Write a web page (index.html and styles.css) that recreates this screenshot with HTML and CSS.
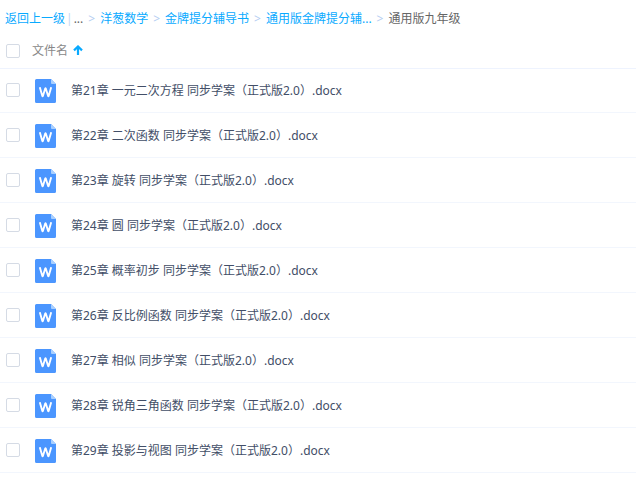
FILE: index.html
```html
<!DOCTYPE html>
<html lang="zh-CN">
<head>
<meta charset="utf-8">
<title>通用版九年级</title>
<link rel="stylesheet" href="styles.css">
</head>
<body>
<svg class="defs" aria-hidden="true">
  <symbol id="word" viewBox="0 0 21 24">
    <path fill="#4b96ff" d="M1.5 0H16L21 5V22.5a1.5 1.5 0 0 1-1.5 1.5H1.5a1.5 1.5 0 0 1-1.5-1.5V1.5a1.5 1.5 0 0 1 1.5-1.5z"/>
    <path fill="#a9d0ff" d="M16 0L21 5H17a1 1 0 0 1-1-1z"/>
    <path fill="none" stroke="#fff" stroke-width="1.9" stroke-linejoin="bevel" d="M4.8 8.2L7.4 17.2H7.8L10.3 9.2H10.7L13.2 17.2H13.6L16.2 8.2"/>
  </symbol>
</svg>
<nav class="crumbs" aria-label="路径">
  <a href="#">返回上一级</a><span class="bar">|</span><span class="more">...</span>
  <span class="sep">&gt;</span><a href="#">洋葱数学</a>
  <span class="sep">&gt;</span><a href="#">金牌提分辅导书</a>
  <span class="sep">&gt;</span><a href="#">通用版金牌提分辅...</a>
  <span class="sep">&gt;</span><span class="current">通用版九年级</span>
</nav>
<table class="files">
  <colgroup><col class="col-pick"><col class="col-type"><col></colgroup>
  <thead>
    <tr>
      <th class="pick"><input type="checkbox" aria-label="全选"></th>
      <th colspan="2" class="heading">文件名<svg class="arrow" viewBox="0 0 10 10" aria-hidden="true"><path fill="none" stroke="#09aaff" stroke-width="2.2" d="M5 10V1.5M1 5.4L5 1.5L9 5.4"/></svg></th>
    </tr>
  </thead>
  <tbody>
    <tr><td class="pick"><input type="checkbox" id="f21"></td><td class="type"><svg class="doc"><use href="#word"/></svg></td><td class="name"><label for="f21">第21章 一元二次方程 同步学案（正式版2.0）.docx</label></td></tr>
    <tr><td class="pick"><input type="checkbox" id="f22"></td><td class="type"><svg class="doc"><use href="#word"/></svg></td><td class="name"><label for="f22">第22章 二次函数 同步学案（正式版2.0）.docx</label></td></tr>
    <tr><td class="pick"><input type="checkbox" id="f23"></td><td class="type"><svg class="doc"><use href="#word"/></svg></td><td class="name"><label for="f23">第23章 旋转 同步学案（正式版2.0）.docx</label></td></tr>
    <tr><td class="pick"><input type="checkbox" id="f24"></td><td class="type"><svg class="doc"><use href="#word"/></svg></td><td class="name"><label for="f24">第24章 圆 同步学案（正式版2.0）.docx</label></td></tr>
    <tr><td class="pick"><input type="checkbox" id="f25"></td><td class="type"><svg class="doc"><use href="#word"/></svg></td><td class="name"><label for="f25">第25章 概率初步 同步学案（正式版2.0）.docx</label></td></tr>
    <tr><td class="pick"><input type="checkbox" id="f26"></td><td class="type"><svg class="doc"><use href="#word"/></svg></td><td class="name"><label for="f26">第26章 反比例函数 同步学案（正式版2.0）.docx</label></td></tr>
    <tr><td class="pick"><input type="checkbox" id="f27"></td><td class="type"><svg class="doc"><use href="#word"/></svg></td><td class="name"><label for="f27">第27章 相似 同步学案（正式版2.0）.docx</label></td></tr>
    <tr><td class="pick"><input type="checkbox" id="f28"></td><td class="type"><svg class="doc"><use href="#word"/></svg></td><td class="name"><label for="f28">第28章 锐角三角函数 同步学案（正式版2.0）.docx</label></td></tr>
    <tr><td class="pick"><input type="checkbox" id="f29"></td><td class="type"><svg class="doc"><use href="#word"/></svg></td><td class="name"><label for="f29">第29章 投影与视图 同步学案（正式版2.0）.docx</label></td></tr>
  </tbody>
</table>
</body>
</html>
```
FILE: styles.css
```css
* { box-sizing: border-box; }

body {
  margin: 0;
  background: #fff;
  color: #424e67;
  font: 12px/18px "Noto Sans", "Noto Sans CJK SC", sans-serif;
}

.defs { display: none; }

.crumbs {
  display: flex;
  height: 33px;
  padding: 10px 5px 0;
  white-space: nowrap;
}
.crumbs a { color: #09aaff; text-decoration: none; }
.bar { margin: 0 1px; color: #c4d8f4; }
.more, .current { color: #666; }
.sep { margin: 0 5px; color: #b4cdf2; }

.files {
  width: 100%;
  border-collapse: separate;
  border-spacing: 0;
  table-layout: fixed;
}
.col-pick { width: 32px; }
.col-type { width: 39px; }
.files th, .files td {
  padding: 0;
  text-align: left;
  vertical-align: middle;
  font-weight: normal;
}
.files th { height: 35px; }
.files td {
  height: 45px;
  border-bottom: 1px solid #f2f6fd;
}
.files tbody tr:first-child td { box-shadow: inset 0 1px #eef3fe; }
.files .pick { padding-left: 6px; }
.files .type, .files .name { padding-top: 2px; }
.files .heading { color: #888; }

input {
  display: block;
  appearance: none;
  width: 14px;
  height: 14px;
  margin: 0;
  border: 1px solid #d5dbe5;
  border-radius: 2px;
  background: #fff;
}
input:checked { background: #09aaff; }

.arrow {
  width: 10px;
  height: 10px;
  margin-left: 5px;
}
.doc {
  display: block;
  width: 21px;
  height: 24px;
  margin-left: 3px;
}
```
